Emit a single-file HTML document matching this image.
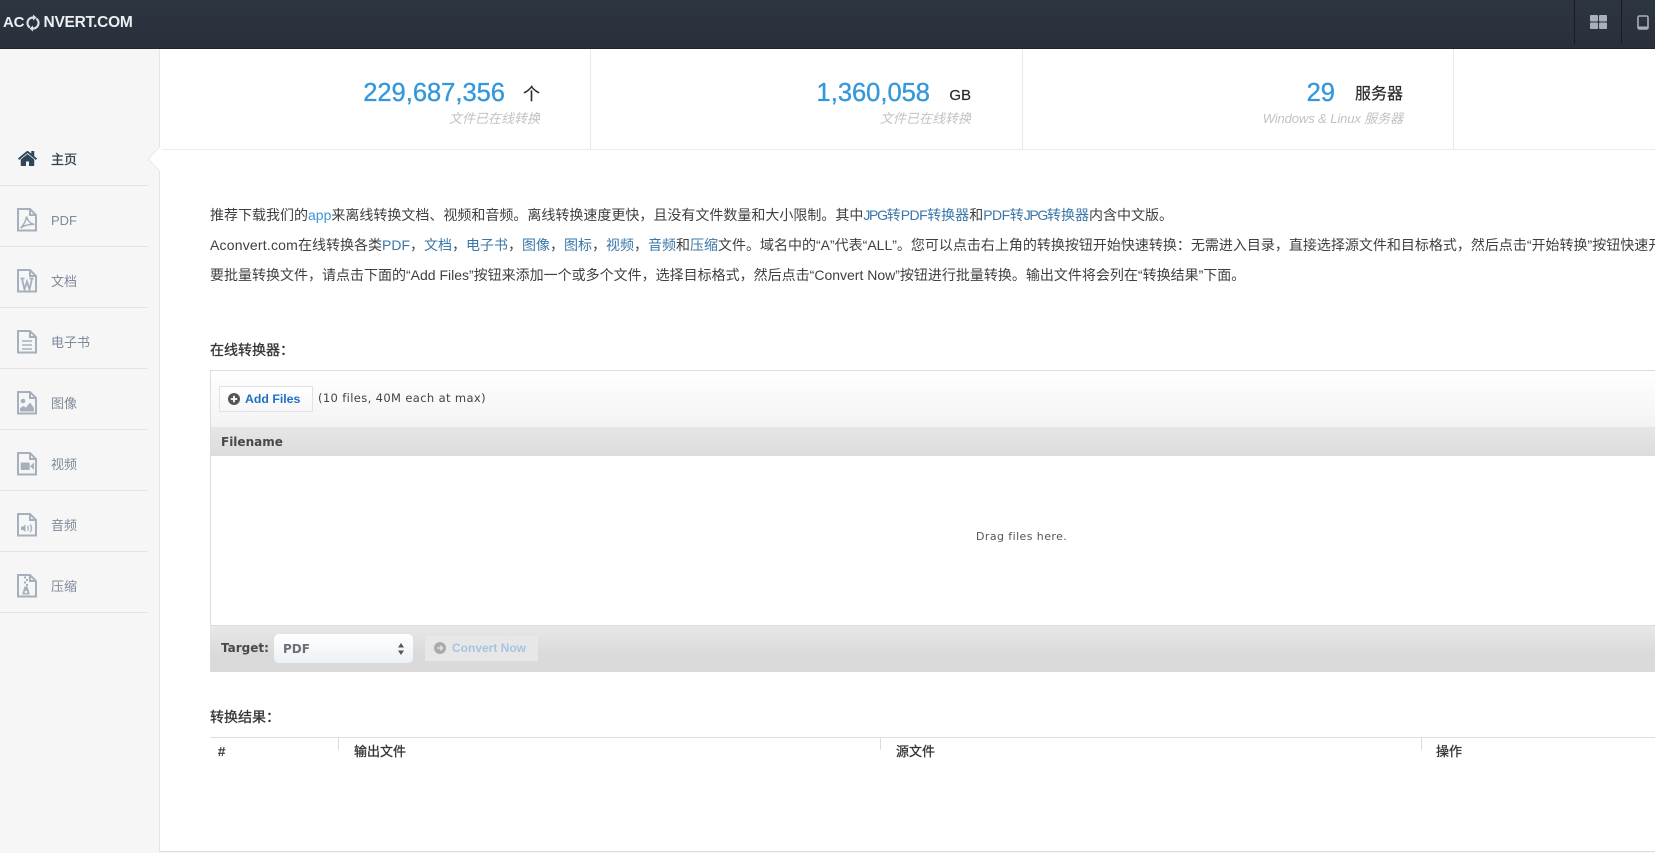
<!DOCTYPE html>
<html lang="zh">
<head>
<meta charset="utf-8">
<title>Aconvert</title>
<style>
*{box-sizing:border-box}
html,body{margin:0;padding:0;width:1655px;height:853px;overflow:hidden;background:#f6f6f7}
body{position:relative;font-family:"Liberation Sans","Noto Sans CJK SC",sans-serif;color:#3c3c3c}
.a{position:absolute;white-space:nowrap}
a{text-decoration:none;color:#3a77a8}
#hd{left:0;top:0;width:1655px;height:49px;background:linear-gradient(#2d3540,#29303b);border-bottom:1px solid #1f242c}
#main{left:159px;top:49px;width:1496px;height:803px;background:#fff;border-left:1px solid #e4e5e6;border-bottom:1px solid #dedede}
.sep{width:1px;background:#e9e9e9;top:49px;height:100px}
.num{font-size:25.5px;line-height:30px;color:#3498db;top:78px;text-align:right;-webkit-text-stroke:.35px #3498db}
.unit{color:#2b2b2b;line-height:24px;text-align:right;-webkit-text-stroke:.2px #2b2b2b}
.sub{font-size:13px;font-style:italic;color:#c2c2c2;line-height:18px;top:110px;text-align:right}
.line{height:1px;background:#e3e4e5;left:0;width:148px}
.nav{left:51px;font-size:13px;line-height:18px;color:#7d8a99}
.ic{position:absolute;left:17px;width:20px;height:24px}
.p{left:210px;font-size:14px;line-height:20px;color:#3f3f3f;width:1445px;overflow:hidden}
.h{left:210px;font-size:14px;line-height:18px;color:#333;-webkit-text-stroke:.3px #333}
.dj{font-family:"DejaVu Sans","Noto Sans CJK SC",sans-serif}
.th{font-size:13px;color:#333;line-height:18px;top:743px;-webkit-text-stroke:.3px #333}
.ts{width:1px;height:13px;top:737px;background:#ddd}
.f{fill:none;stroke:#a6b0bc;stroke-width:2}
.g{fill:#a6b0bc}
.j{letter-spacing:-1.3px}
.d{letter-spacing:-.5px}
</style>
</head>
<body>
<div class="a" id="hd"></div>
<div class="a" style="left:3px;top:13px;color:#edf0f2;font-size:15px;font-weight:bold;line-height:20px;letter-spacing:-.2px">AC</div>
<svg class="a" style="left:26px;top:14px" width="14" height="18" viewBox="0 0 14 18"><path d="M7 3.500A5.500 5.500 0 0 0 3.800 13.500" fill="none" stroke="#dfe3e6" stroke-width="2.200"/><path d="M7 .5L10.500 3.500L7 6.500Z" fill="#dfe3e6"/><path d="M7 14.500A5.500 5.500 0 0 0 10.200 4.500" fill="none" stroke="#dfe3e6" stroke-width="2.200"/><path d="M7 17.500L3.500 14.500L7 11.500Z" fill="#dfe3e6"/></svg>
<div class="a" style="left:43.500px;top:13px;color:#edf0f2;font-size:15.500px;font-weight:bold;line-height:20px;letter-spacing:-.25px">NVERT.COM</div>
<div class="a" style="left:1574px;top:0;width:1px;height:44px;background:#191d23"></div>
<div class="a" style="left:1621px;top:0;width:1px;height:44px;background:#191d23"></div>
<svg class="a" style="left:1590px;top:15px" width="17" height="15" viewBox="0 0 17 15"><g fill="#a9b0b8"><rect x="0" y="0" width="8" height="6.500" rx="1"/><rect x="9" y="0" width="8" height="6.500" rx="1"/><rect x="0" y="7.500" width="8" height="6.500" rx="1"/><rect x="9" y="7.500" width="8" height="6.500" rx="1"/></g></svg>
<svg class="a" style="left:1637px;top:15px" width="12" height="15" viewBox="0 0 12 15"><rect x="1" y="1" width="10" height="13" rx="1.500" fill="none" stroke="#a9b0b8" stroke-width="1.600"/><rect x="1" y="11.500" width="10" height="2.500" fill="#a9b0b8"/></svg>

<div class="a" id="main"></div>
<div class="a" style="left:160px;top:149px;width:1495px;height:1px;background:#ececec"></div>
<div class="a sep" style="left:590px"></div>
<div class="a sep" style="left:1022px"></div>
<div class="a sep" style="left:1453px"></div>

<div class="a num" style="left:305px;width:200px">229,687,356</div>
<div class="a unit" style="left:500px;width:40px;top:83px;font-size:17px">个</div>
<div class="a sub" style="left:400px;width:140px">文件已在线转换</div>

<div class="a num" style="left:730px;width:200px">1,360,058</div>
<div class="a unit" style="left:930px;width:41px;top:84px;font-size:15px">GB</div>
<div class="a sub" style="left:831px;width:140px">文件已在线转换</div>

<div class="a num" style="left:1235px;width:100px">29</div>
<div class="a unit" style="left:1343px;width:60px;top:83px;font-size:16px">服务器</div>
<div class="a sub" style="left:1203px;width:200px;letter-spacing:-.1px">Windows &amp; Linux 服务器</div>

<!-- sidebar -->
<svg class="a" style="left:146px;top:146px" width="16" height="26" viewBox="0 0 16 26"><path d="M14 0.500 L2 13 L14 25.500 H16 V0.500Z" fill="#fff"/><path d="M14 0.500 L2 13 L14 25.500" fill="none" stroke="#e9eaeb" stroke-width="1"/></svg>
<svg class="ic" style="top:148px;width:21px;height:21px" viewBox="0 0 1792 1792"><path fill="#2f4558" d="M1472 992v480q0 26-19 45t-45 19h-384v-384h-256v384h-384q-26 0-45-19t-19-45v-480q0-1 .5-3t.5-3l575-474 575 474q1 2 1 6zm223-69l-62 74q-8 9-21 11h-3q-13 0-21-7l-692-577-692 577q-12 8-24 7-13-2-21-11l-62-74q-8-10-7-23.500t11-21.500l719-599q32-26 76-26t76 26l244 204v-195q0-14 9-23t23-9h192q14 0 23 9t9 23v408l219 182q10 8 11 21.500t-7 23.500z"/></svg>
<div class="a nav" style="top:151px;color:#2f3f4f;-webkit-text-stroke:.3px #2f3f4f">主页</div>
<div class="a line" style="top:185px"></div>

<svg class="ic" style="top:208px" viewBox="0 0 20 24"><path class="f" d="M1 1H13L19 7V22.500H1Z"/><path class="f" stroke-width="1.500" d="M13 1V7H19"/><path d="M3.500 20C6.500 17.500 9 13 9.500 8.500C10.500 12.500 13 15.500 17.500 16.500C13 16 8 17 3.500 20Z" fill="none" stroke="#a6b0bc" stroke-width="1.500"/></svg>
<div class="a nav" style="top:212px">PDF</div>
<div class="a line" style="top:246px"></div>

<svg class="ic" style="top:269px" viewBox="0 0 20 24"><path class="f" d="M1 1H13L19 7V22.500H1Z"/><path class="f" stroke-width="1.500" d="M13 1V7H19"/><path d="M3.500 9.500H7.500M12.500 9.500H16.500M5 9.500L7.500 20.500L10 12.500L12.500 20.500L15 9.500" fill="none" stroke="#a6b0bc" stroke-width="1.800"/></svg>
<div class="a nav" style="top:273px">文档</div>
<div class="a line" style="top:307px"></div>

<svg class="ic" style="top:330px" viewBox="0 0 20 24"><path class="f" d="M1 1H13L19 7V22.500H1Z"/><path class="f" stroke-width="1.500" d="M13 1V7H19"/><path d="M5 11H15M5 15H15M5 19H15" stroke="#a6b0bc" stroke-width="1.500"/></svg>
<div class="a nav" style="top:334px">电子书</div>
<div class="a line" style="top:368px"></div>

<svg class="ic" style="top:391px" viewBox="0 0 20 24"><path class="f" d="M1 1H13L19 7V22.500H1Z"/><path class="f" stroke-width="1.500" d="M13 1V7H19"/><circle cx="6" cy="10" r="2.300" class="g"/><path d="M3 20.500V17L6.500 15L9 16.500L13 11.500L17 17V20.500Z" class="g"/></svg>
<div class="a nav" style="top:395px">图像</div>
<div class="a line" style="top:429px"></div>

<svg class="ic" style="top:452px" viewBox="0 0 20 24"><path class="f" d="M1 1H13L19 7V22.500H1Z"/><path class="f" stroke-width="1.500" d="M13 1V7H19"/><rect x="3.700" y="10.500" width="9" height="7.500" rx="1" class="g"/><path d="M13 14.300L17 10.500V18Z" class="g"/></svg>
<div class="a nav" style="top:456px">视频</div>
<div class="a line" style="top:490px"></div>

<svg class="ic" style="top:513px" viewBox="0 0 20 24"><path class="f" d="M1 1H13L19 7V22.500H1Z"/><path class="f" stroke-width="1.500" d="M13 1V7H19"/><path d="M4 13.500H6L8.500 11.500V19L6 17H4Z" class="g"/><path d="M10.500 13C11.500 14 11.500 16.500 10.500 17.500M13 11.500C15 13.500 15 17 13 19" fill="none" stroke="#a6b0bc" stroke-width="1.300"/></svg>
<div class="a nav" style="top:517px">音频</div>
<div class="a line" style="top:551px"></div>

<svg class="ic" style="top:574px" viewBox="0 0 20 24"><path class="f" d="M1 1H13L19 7V22.500H1Z"/><path class="f" stroke-width="1.500" d="M13 1V7H19"/><path d="M7 2.500H9V4.500H7ZM9 5H11V7H9ZM7 7.500H9V9.500H7ZM9 10H11V12H9Z" class="g"/><path d="M7.500 12.500H10.500L12.500 19V20.500H5.500V19Z" class="g"/><circle cx="9" cy="18" r="1.300" fill="#f6f6f7"/></svg>
<div class="a nav" style="top:578px">压缩</div>
<div class="a line" style="top:612px"></div>

<!-- paragraphs -->
<div class="a p" style="top:205px">推荐下载我们的<a style="color:#3b97d8" href="#">app</a>来离线转换文档、视频和音频。离线转换速度更快，且没有文件数量和大小限制。其中<a href="#"><span class="j">JPG</span>转<span class="d">PDF</span>转换器</a>和<a href="#"><span class="d">PDF</span>转<span class="j">JPG</span>转换器</a>内含中文版。</div>
<div class="a p" style="top:235px"><span style="letter-spacing:.2px">Aconvert.com</span>在线转换各类<a href="#">PDF</a>，<a href="#">文档</a>，<a href="#">电子书</a>，<a href="#">图像</a>，<a href="#">图标</a>，<a href="#">视频</a>，<a href="#">音频</a>和<a href="#">压缩</a>文件。域名中的“A”代表“ALL”。您可以点击右上角的转换按钮开始快速转换：无需进入目录，直接选择源文件和目标格式，然后点击“开始转换”按钮快速开始转换。</div>
<div class="a p" style="top:265px">要批量转换文件，请点击下面的“Add Files”按钮来添加一个或多个文件，选择目标格式，然后点击“Convert Now”按钮进行批量转换。输出文件将会列在“转换结果”下面。</div>

<div class="a h" style="top:341px">在线转换器：</div>

<!-- uploader -->
<div class="a" style="left:210px;top:370px;width:1445px;height:302px;background:#fff;border-left:1px solid #ddd;border-top:1px solid #ddd"></div>
<div class="a" style="left:211px;top:371px;width:1444px;height:56px;background:linear-gradient(#fff,#f3f3f3)"></div>
<div class="a" style="left:219px;top:386px;width:94px;height:26px;background:linear-gradient(#fff,#f6f6f6);border:1px solid #e2e2e2"></div>
<svg class="a" style="left:228px;top:393px" width="12" height="12" viewBox="0 0 12 12"><circle cx="6" cy="6" r="6" fill="#555"/><path d="M6 2.800V9.200M2.800 6H9.200" stroke="#fff" stroke-width="1.800"/></svg>
<div class="a" style="left:245px;top:391px;font-size:12.300px;font-weight:bold;color:#1f6fc4;line-height:16px">Add Files</div>
<div class="a dj" style="left:318px;top:390px;font-size:11.500px;letter-spacing:.37px;color:#444;line-height:16px">(10 files, 40M each at max)</div>

<div class="a" style="left:211px;top:427px;width:1444px;height:29px;background:linear-gradient(#e6e6e6,#dcdcdc)"></div>
<div class="a dj" style="left:221px;top:434px;font-size:12px;font-weight:bold;color:#484848;line-height:16px">Filename</div>
<div class="a dj" style="left:976px;top:529px;font-size:11px;letter-spacing:.42px;color:#555;line-height:16px">Drag files here.</div>

<div class="a" style="left:210px;top:625px;width:1445px;height:47px;background:linear-gradient(#e8e8e8,#dadada 60%,#dadada);border-top:1px solid #dcdcdc"></div>
<div class="a dj" style="left:221px;top:640px;font-size:12px;font-weight:bold;color:#484848;line-height:16px">Target:</div>
<div class="a" style="left:274px;top:634px;width:139px;height:29px;border-radius:5px;background:linear-gradient(#fff,#edf1f5)"></div>
<div class="a dj" style="left:283px;top:641px;font-size:12px;font-weight:bold;color:#6e6e78;line-height:16px">PDF</div>
<svg class="a" style="left:397px;top:642px" width="8" height="14" viewBox="0 0 8 14"><path d="M4 1L7 5.500H1ZM4 13L1 8.500H7Z" fill="#555"/></svg>
<div class="a" style="left:425px;top:636px;width:113px;height:25px;background:#e7e7e7"></div>
<svg class="a" style="left:434px;top:642px" width="12" height="12" viewBox="0 0 12 12"><circle cx="6" cy="6" r="6" fill="#aaa"/><path d="M3 6H8M6 3.700L8.500 6L6 8.300" fill="none" stroke="#e7e7e7" stroke-width="1.300"/></svg>
<div class="a" style="left:452px;top:640px;font-size:12px;font-weight:bold;color:#a7c3e2;line-height:16px">Convert Now</div>

<!-- results -->
<div class="a h" style="top:708px">转换结果：</div>
<div class="a" style="left:210px;top:737px;width:1445px;height:1px;background:#ddd"></div>
<div class="a ts" style="left:338px"></div>
<div class="a ts" style="left:880px"></div>
<div class="a ts" style="left:1421px"></div>
<div class="a th" style="left:218px">#</div>
<div class="a th" style="left:354px">输出文件</div>
<div class="a th" style="left:896px">源文件</div>
<div class="a th" style="left:1436px">操作</div>
</body>
</html>
